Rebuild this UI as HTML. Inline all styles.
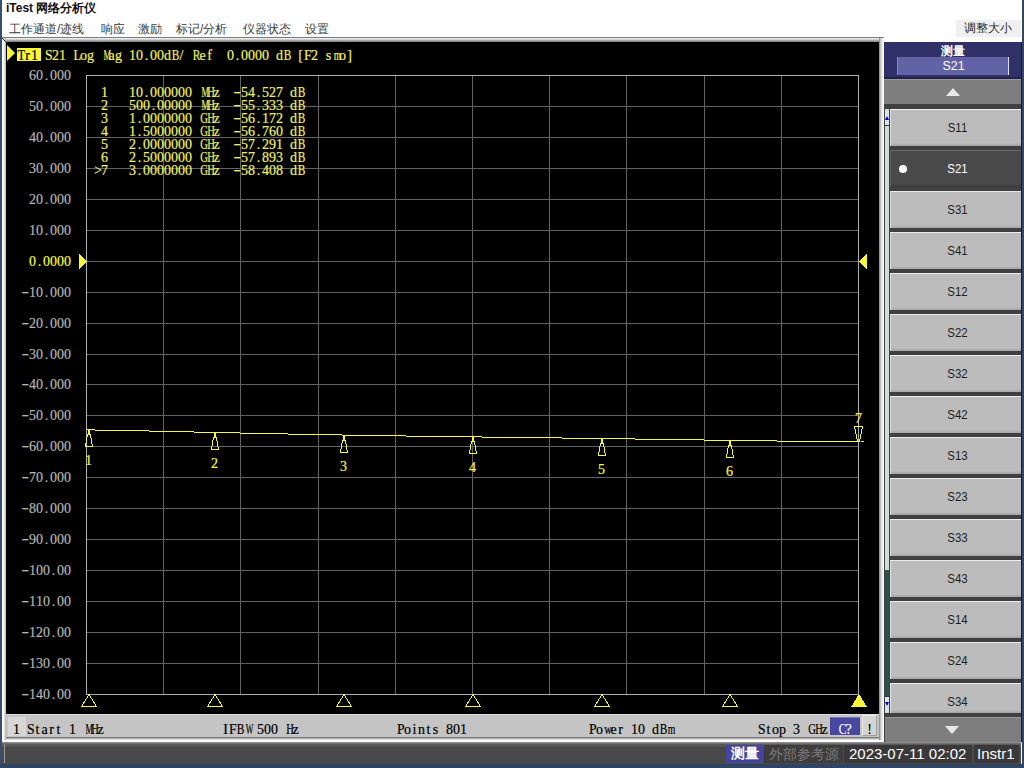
<!DOCTYPE html>
<html><head><meta charset="utf-8"><style>
*{margin:0;padding:0;box-sizing:border-box}
html,body{width:1024px;height:768px;overflow:hidden;background:#fff;font-family:"Liberation Sans",sans-serif}
.a{position:absolute}
.sf{position:absolute;font-family:"Liberation Serif",serif;font-size:14px;line-height:18px;white-space:pre;-webkit-text-stroke:0.2px currentColor}
.sf i{display:inline-block;width:7px;text-align:center;font-style:normal}
.sf b{display:inline-block;font-weight:normal}
.m{position:absolute;font-family:"Liberation Mono",monospace;font-size:13px;line-height:18px;white-space:pre;transform:scaleX(0.89744);transform-origin:0 0}
.menu{position:absolute;top:20px;font-size:12px;line-height:18px;color:#3a3a3a}
.btn{position:absolute;left:890px;width:131px;background:linear-gradient(#bcbcbc 0,#bcbcbc calc(100% - 3px),#a4a4a4 100%);border-top:1px solid #ececec;border-left:1px solid #e0e0e0;color:#1e1e1e;font-size:13px}
.btn.sel{background:linear-gradient(#4a4a4a 0,#4a4a4a calc(100% - 3px),#383838 100%);border-top:1px solid #6a6a6a;border-left:1px solid #606060;color:#fff}
.bt{position:absolute;left:1px;width:131px;text-align:center;line-height:18px;transform:scaleX(0.88)}
.dot{position:absolute;left:8px;top:14px;width:8px;height:8px;border-radius:50%;background:#fff}
</style></head><body>
<!-- borders -->
<div class="a" style="left:0;top:0;width:2px;height:768px;background:#34506e"></div>
<div class="a" style="left:1022px;top:0;width:2px;height:768px;background:#37455f"></div>
<div class="a" style="left:1021px;top:42px;width:1px;height:700px;background:#1c1c26"></div>
<div class="a" style="left:0;top:764px;width:1024px;height:4px;background:#2e4462"></div>
<!-- title & menu -->
<div class="a" style="left:6px;top:0px;font-size:12px;line-height:16px;font-weight:bold;color:#111">iTest 网络分析仪</div>
<div class="menu" style="left:9px">工作通道/迹线</div>
<div class="menu" style="left:101px">响应</div>
<div class="menu" style="left:138px">激励</div>
<div class="menu" style="left:176px">标记/分析</div>
<div class="menu" style="left:243px">仪器状态</div>
<div class="menu" style="left:305px">设置</div>
<div class="a" style="left:956px;top:20px;width:65px;height:17px;background:#f0f0f0"></div>
<div class="a" style="left:964px;top:19px;font-size:12px;line-height:18px;color:#2a2a2a">调整大小</div>
<!-- chart frame -->
<div class="a" style="left:2px;top:37px;width:882px;height:1px;background:#7c7c7c"></div>
<div class="a" style="left:2px;top:38px;width:882px;height:4px;background:linear-gradient(#ececec 0 1px,#d0d0d0 1px 2px,#a8a8a8 2px 3px,#8c8c8c 3px 4px)"></div>
<div class="a" style="left:2px;top:38px;width:4px;height:704px;background:linear-gradient(90deg,#fbfbfb 0 2px,#dcdcdc 2px 3px,#c4c4c4 3px 4px)"></div>
<div class="a" style="left:879px;top:38px;width:5px;height:704px;background:linear-gradient(90deg,#959595 0 1px,#c0c0c0 1px 2px,#dcdcdc 2px 3px,#eeeeee 3px 4px,#fdfdfd 4px 5px)"></div>
<div class="a" style="left:6px;top:737px;width:873px;height:5px;background:linear-gradient(#787878 0 1px,#b0b0b0 1px 2px,#dcdcdc 2px 3px,#fafafa 3px 5px)"></div>
<div class="a" style="left:2px;top:740px;width:882px;height:2px;background:#fafafa"></div>
<div class="a" style="left:6px;top:42px;width:873px;height:672px;background:#000"></div>
<div class="a" style="left:2px;top:38px;width:1px;height:1px;background:#222"></div><div class="a" style="left:3px;top:39px;width:1px;height:1px;background:#222"></div><div class="a" style="left:4px;top:40px;width:1px;height:1px;background:#222"></div><div class="a" style="left:5px;top:41px;width:1px;height:1px;background:#222"></div>
<svg class="a" style="left:0;top:0" width="1024" height="768" shape-rendering="crispEdges">
<rect x="163" y="75" width="1" height="620" fill="#626262"/>
<rect x="240" y="75" width="1" height="620" fill="#626262"/>
<rect x="318" y="75" width="1" height="620" fill="#626262"/>
<rect x="395" y="75" width="1" height="620" fill="#626262"/>
<rect x="472" y="75" width="1" height="620" fill="#626262"/>
<rect x="549" y="75" width="1" height="620" fill="#626262"/>
<rect x="626" y="75" width="1" height="620" fill="#626262"/>
<rect x="704" y="75" width="1" height="620" fill="#626262"/>
<rect x="781" y="75" width="1" height="620" fill="#626262"/>
<rect x="86" y="106" width="773" height="1" fill="#626262"/>
<rect x="86" y="137" width="773" height="1" fill="#626262"/>
<rect x="86" y="168" width="773" height="1" fill="#626262"/>
<rect x="86" y="199" width="773" height="1" fill="#626262"/>
<rect x="86" y="230" width="773" height="1" fill="#626262"/>
<rect x="86" y="261" width="773" height="1" fill="#626262"/>
<rect x="86" y="292" width="773" height="1" fill="#626262"/>
<rect x="86" y="323" width="773" height="1" fill="#626262"/>
<rect x="86" y="354" width="773" height="1" fill="#626262"/>
<rect x="86" y="384" width="773" height="1" fill="#626262"/>
<rect x="86" y="415" width="773" height="1" fill="#626262"/>
<rect x="86" y="446" width="773" height="1" fill="#626262"/>
<rect x="86" y="477" width="773" height="1" fill="#626262"/>
<rect x="86" y="508" width="773" height="1" fill="#626262"/>
<rect x="86" y="539" width="773" height="1" fill="#626262"/>
<rect x="86" y="570" width="773" height="1" fill="#626262"/>
<rect x="86" y="601" width="773" height="1" fill="#626262"/>
<rect x="86" y="632" width="773" height="1" fill="#626262"/>
<rect x="86" y="663" width="773" height="1" fill="#626262"/>
<rect x="86" y="75" width="773" height="1" fill="#b0b0b0"/>
<rect x="86" y="694" width="773" height="1" fill="#b0b0b0"/>
<rect x="86" y="75" width="1" height="620" fill="#b0b0b0"/>
<rect x="858" y="75" width="1" height="620" fill="#b0b0b0"/>
<rect x="87" y="429" width="8" height="1" fill="#f8f838"/>
<rect x="95" y="430" width="54" height="1" fill="#f8f838"/>
<rect x="149" y="431" width="45" height="1" fill="#f8f838"/>
<rect x="194" y="432" width="46" height="1" fill="#f8f838"/>
<rect x="240" y="433" width="48" height="1" fill="#f8f838"/>
<rect x="288" y="434" width="54" height="1" fill="#f8f838"/>
<rect x="342" y="435" width="64" height="1" fill="#f8f838"/>
<rect x="406" y="436" width="76" height="1" fill="#f8f838"/>
<rect x="482" y="437" width="80" height="1" fill="#f8f838"/>
<rect x="562" y="438" width="73" height="1" fill="#f8f838"/>
<rect x="635" y="439" width="69" height="1" fill="#f8f838"/>
<rect x="704" y="440" width="73" height="1" fill="#f8f838"/>
<rect x="777" y="441" width="82" height="1" fill="#f8f838"/>
<rect x="88" y="429" width="2" height="5" fill="#f8f838"/>
<path d="M87.5 434.5 L90.5 434.5 L92.5 446.5 L85.5 446.5 Z" fill="none" stroke="#f8f838" stroke-width="1"/>
<path d="M89 694.5 L96.5 706.5 L81.5 706.5 Z" fill="none" stroke="#f8f838" stroke-width="1"/>
<rect x="214" y="432" width="2" height="5" fill="#f8f838"/>
<path d="M213.5 437.5 L216.5 437.5 L218.5 449.5 L211.5 449.5 Z" fill="none" stroke="#f8f838" stroke-width="1"/>
<path d="M215 694.5 L222.5 706.5 L207.5 706.5 Z" fill="none" stroke="#f8f838" stroke-width="1"/>
<rect x="343" y="435" width="2" height="5" fill="#f8f838"/>
<path d="M342.5 440.5 L345.5 440.5 L347.5 452.5 L340.5 452.5 Z" fill="none" stroke="#f8f838" stroke-width="1"/>
<path d="M344 694.5 L351.5 706.5 L336.5 706.5 Z" fill="none" stroke="#f8f838" stroke-width="1"/>
<rect x="472" y="436" width="2" height="5" fill="#f8f838"/>
<path d="M471.5 441.5 L474.5 441.5 L476.5 453.5 L469.5 453.5 Z" fill="none" stroke="#f8f838" stroke-width="1"/>
<path d="M473 694.5 L480.5 706.5 L465.5 706.5 Z" fill="none" stroke="#f8f838" stroke-width="1"/>
<rect x="601" y="438" width="2" height="5" fill="#f8f838"/>
<path d="M600.5 443.5 L603.5 443.5 L605.5 455.5 L598.5 455.5 Z" fill="none" stroke="#f8f838" stroke-width="1"/>
<path d="M602 694.5 L609.5 706.5 L594.5 706.5 Z" fill="none" stroke="#f8f838" stroke-width="1"/>
<rect x="729" y="440" width="2" height="5" fill="#f8f838"/>
<path d="M728.5 445.5 L731.5 445.5 L733.5 457.5 L726.5 457.5 Z" fill="none" stroke="#f8f838" stroke-width="1"/>
<path d="M730 694.5 L737.5 706.5 L722.5 706.5 Z" fill="none" stroke="#f8f838" stroke-width="1"/>
<path d="M854.5 426.5 L862.5 426.5 L859.5 441.5 L857.5 441.5 Z" fill="none" stroke="#f8f838" stroke-width="1"/>
<rect x="861" y="441" width="3" height="1" fill="#f8f838"/>
<path d="M859 694 L867 707 L851 707 Z" fill="#f8f838"/>
<path d="M79 254 L87 261.5 L79 269 Z" fill="#f8f838"/>
<path d="M867 254 L859 261.5 L867 269 Z" fill="#f8f838"/>
</svg>
<!-- Tr1 -->
<div class="a" style="left:7px;top:45px;width:0;height:0;border-top:8px solid transparent;border-bottom:8px solid transparent;border-left:8px solid #f8f838"></div>
<div class="a" style="left:17px;top:48px;width:24px;height:13px;background:#f8f838"></div>
<div class="sf" style="left:17px;top:47px;color:#000;"><i><b style="transform:scaleX(0.889)">T</b></i><i>r</i><i>1</i></div>
<div class="sf" style="left:29px;top:67px;color:#b4b4b4;"><i>6</i><i>0</i><i>.</i><i>0</i><i>0</i><i>0</i></div>
<div class="sf" style="left:29px;top:98px;color:#b4b4b4;"><i>5</i><i>0</i><i>.</i><i>0</i><i>0</i><i>0</i></div>
<div class="sf" style="left:29px;top:129px;color:#b4b4b4;"><i>4</i><i>0</i><i>.</i><i>0</i><i>0</i><i>0</i></div>
<div class="sf" style="left:29px;top:160px;color:#b4b4b4;"><i>3</i><i>0</i><i>.</i><i>0</i><i>0</i><i>0</i></div>
<div class="sf" style="left:29px;top:191px;color:#b4b4b4;"><i>2</i><i>0</i><i>.</i><i>0</i><i>0</i><i>0</i></div>
<div class="sf" style="left:29px;top:222px;color:#b4b4b4;"><i>1</i><i>0</i><i>.</i><i>0</i><i>0</i><i>0</i></div>
<div class="sf" style="left:29px;top:253px;color:#f8f838;"><i>0</i><i>.</i><i>0</i><i>0</i><i>0</i><i>0</i></div>
<div class="sf" style="left:22px;top:284px;color:#b4b4b4;"><i><b style="transform:scaleX(1.600) translateY(-1.5px)">-</b></i><i>1</i><i>0</i><i>.</i><i>0</i><i>0</i><i>0</i></div>
<div class="sf" style="left:22px;top:315px;color:#b4b4b4;"><i><b style="transform:scaleX(1.600) translateY(-1.5px)">-</b></i><i>2</i><i>0</i><i>.</i><i>0</i><i>0</i><i>0</i></div>
<div class="sf" style="left:22px;top:346px;color:#b4b4b4;"><i><b style="transform:scaleX(1.600) translateY(-1.5px)">-</b></i><i>3</i><i>0</i><i>.</i><i>0</i><i>0</i><i>0</i></div>
<div class="sf" style="left:22px;top:376px;color:#b4b4b4;"><i><b style="transform:scaleX(1.600) translateY(-1.5px)">-</b></i><i>4</i><i>0</i><i>.</i><i>0</i><i>0</i><i>0</i></div>
<div class="sf" style="left:22px;top:407px;color:#b4b4b4;"><i><b style="transform:scaleX(1.600) translateY(-1.5px)">-</b></i><i>5</i><i>0</i><i>.</i><i>0</i><i>0</i><i>0</i></div>
<div class="sf" style="left:22px;top:438px;color:#b4b4b4;"><i><b style="transform:scaleX(1.600) translateY(-1.5px)">-</b></i><i>6</i><i>0</i><i>.</i><i>0</i><i>0</i><i>0</i></div>
<div class="sf" style="left:22px;top:469px;color:#b4b4b4;"><i><b style="transform:scaleX(1.600) translateY(-1.5px)">-</b></i><i>7</i><i>0</i><i>.</i><i>0</i><i>0</i><i>0</i></div>
<div class="sf" style="left:22px;top:500px;color:#b4b4b4;"><i><b style="transform:scaleX(1.600) translateY(-1.5px)">-</b></i><i>8</i><i>0</i><i>.</i><i>0</i><i>0</i><i>0</i></div>
<div class="sf" style="left:22px;top:531px;color:#b4b4b4;"><i><b style="transform:scaleX(1.600) translateY(-1.5px)">-</b></i><i>9</i><i>0</i><i>.</i><i>0</i><i>0</i><i>0</i></div>
<div class="sf" style="left:22px;top:562px;color:#b4b4b4;"><i><b style="transform:scaleX(1.600) translateY(-1.5px)">-</b></i><i>1</i><i>0</i><i>0</i><i>.</i><i>0</i><i>0</i></div>
<div class="sf" style="left:22px;top:593px;color:#b4b4b4;"><i><b style="transform:scaleX(1.600) translateY(-1.5px)">-</b></i><i>1</i><i>1</i><i>0</i><i>.</i><i>0</i><i>0</i></div>
<div class="sf" style="left:22px;top:624px;color:#b4b4b4;"><i><b style="transform:scaleX(1.600) translateY(-1.5px)">-</b></i><i>1</i><i>2</i><i>0</i><i>.</i><i>0</i><i>0</i></div>
<div class="sf" style="left:22px;top:655px;color:#b4b4b4;"><i><b style="transform:scaleX(1.600) translateY(-1.5px)">-</b></i><i>1</i><i>3</i><i>0</i><i>.</i><i>0</i><i>0</i></div>
<div class="sf" style="left:22px;top:686px;color:#b4b4b4;"><i><b style="transform:scaleX(1.600) translateY(-1.5px)">-</b></i><i>1</i><i>4</i><i>0</i><i>.</i><i>0</i><i>0</i></div>
<div class="sf" style="left:45px;top:47px;color:#f0f068;"><i><b style="transform:scaleX(0.976)">S</b></i><i>2</i><i>1</i><i> </i><i><b style="transform:scaleX(0.889)">L</b></i><i>o</i><i>g</i><i> </i><i><b style="transform:scaleX(0.611)">M</b></i><i>a</i><i>g</i><i> </i><i>1</i><i>0</i><i>.</i><i>0</i><i>0</i><i>d</i><i><b style="transform:scaleX(0.814)">B</b></i><i>/</i><i> </i><i><b style="transform:scaleX(0.814)">R</b></i><i>e</i><i>f</i><i> </i><i> </i><i>0</i><i>.</i><i>0</i><i>0</i><i>0</i><i>0</i><i> </i><i>d</i><i><b style="transform:scaleX(0.814)">B</b></i><i> </i><i>[</i><i><b style="transform:scaleX(0.976)">F</b></i><i>2</i><i> </i><i>s</i><i><b style="transform:scaleX(0.698)">m</b></i><i>o</i><i>]</i></div>
<div class="sf" style="left:94px;top:84px;color:#f0f068;"><i> </i><i>1</i><i> </i><i> </i><i> </i><i>1</i><i>0</i><i>.</i><i>0</i><i>0</i><i>0</i><i>0</i><i>0</i><i>0</i><i> </i><i><b style="transform:scaleX(0.611)">M</b></i><i><b style="transform:scaleX(0.752)">H</b></i><i>z</i><i> </i><i> </i><i><b style="transform:scaleX(1.600) translateY(-1.5px)">-</b></i><i>5</i><i>4</i><i>.</i><i>5</i><i>2</i><i>7</i><i> </i><i>d</i><i><b style="transform:scaleX(0.814)">B</b></i></div>
<div class="sf" style="left:94px;top:97px;color:#f0f068;"><i> </i><i>2</i><i> </i><i> </i><i> </i><i>5</i><i>0</i><i>0</i><i>.</i><i>0</i><i>0</i><i>0</i><i>0</i><i>0</i><i> </i><i><b style="transform:scaleX(0.611)">M</b></i><i><b style="transform:scaleX(0.752)">H</b></i><i>z</i><i> </i><i> </i><i><b style="transform:scaleX(1.600) translateY(-1.5px)">-</b></i><i>5</i><i>5</i><i>.</i><i>3</i><i>3</i><i>3</i><i> </i><i>d</i><i><b style="transform:scaleX(0.814)">B</b></i></div>
<div class="sf" style="left:94px;top:110px;color:#f0f068;"><i> </i><i>3</i><i> </i><i> </i><i> </i><i>1</i><i>.</i><i>0</i><i>0</i><i>0</i><i>0</i><i>0</i><i>0</i><i>0</i><i> </i><i><b style="transform:scaleX(0.752)">G</b></i><i><b style="transform:scaleX(0.752)">H</b></i><i>z</i><i> </i><i> </i><i><b style="transform:scaleX(1.600) translateY(-1.5px)">-</b></i><i>5</i><i>6</i><i>.</i><i>1</i><i>7</i><i>2</i><i> </i><i>d</i><i><b style="transform:scaleX(0.814)">B</b></i></div>
<div class="sf" style="left:94px;top:123px;color:#f0f068;"><i> </i><i>4</i><i> </i><i> </i><i> </i><i>1</i><i>.</i><i>5</i><i>0</i><i>0</i><i>0</i><i>0</i><i>0</i><i>0</i><i> </i><i><b style="transform:scaleX(0.752)">G</b></i><i><b style="transform:scaleX(0.752)">H</b></i><i>z</i><i> </i><i> </i><i><b style="transform:scaleX(1.600) translateY(-1.5px)">-</b></i><i>5</i><i>6</i><i>.</i><i>7</i><i>6</i><i>0</i><i> </i><i>d</i><i><b style="transform:scaleX(0.814)">B</b></i></div>
<div class="sf" style="left:94px;top:136px;color:#f0f068;"><i> </i><i>5</i><i> </i><i> </i><i> </i><i>2</i><i>.</i><i>0</i><i>0</i><i>0</i><i>0</i><i>0</i><i>0</i><i>0</i><i> </i><i><b style="transform:scaleX(0.752)">G</b></i><i><b style="transform:scaleX(0.752)">H</b></i><i>z</i><i> </i><i> </i><i><b style="transform:scaleX(1.600) translateY(-1.5px)">-</b></i><i>5</i><i>7</i><i>.</i><i>2</i><i>9</i><i>1</i><i> </i><i>d</i><i><b style="transform:scaleX(0.814)">B</b></i></div>
<div class="sf" style="left:94px;top:149px;color:#f0f068;"><i> </i><i>6</i><i> </i><i> </i><i> </i><i>2</i><i>.</i><i>5</i><i>0</i><i>0</i><i>0</i><i>0</i><i>0</i><i>0</i><i> </i><i><b style="transform:scaleX(0.752)">G</b></i><i><b style="transform:scaleX(0.752)">H</b></i><i>z</i><i> </i><i> </i><i><b style="transform:scaleX(1.600) translateY(-1.5px)">-</b></i><i>5</i><i>7</i><i>.</i><i>8</i><i>9</i><i>3</i><i> </i><i>d</i><i><b style="transform:scaleX(0.814)">B</b></i></div>
<div class="sf" style="left:94px;top:162px;color:#f0f068;"><i><b style="transform:scaleX(0.963)">&gt;</b></i><i>7</i><i> </i><i> </i><i> </i><i>3</i><i>.</i><i>0</i><i>0</i><i>0</i><i>0</i><i>0</i><i>0</i><i>0</i><i> </i><i><b style="transform:scaleX(0.752)">G</b></i><i><b style="transform:scaleX(0.752)">H</b></i><i>z</i><i> </i><i> </i><i><b style="transform:scaleX(1.600) translateY(-1.5px)">-</b></i><i>5</i><i>8</i><i>.</i><i>4</i><i>0</i><i>8</i><i> </i><i>d</i><i><b style="transform:scaleX(0.814)">B</b></i></div>
<div class="sf" style="left:85px;top:452px;color:#f8f838;"><i>1</i></div>
<div class="sf" style="left:211px;top:455px;color:#f8f838;"><i>2</i></div>
<div class="sf" style="left:340px;top:458px;color:#f8f838;"><i>3</i></div>
<div class="sf" style="left:469px;top:459px;color:#f8f838;"><i>4</i></div>
<div class="sf" style="left:598px;top:461px;color:#f8f838;"><i>5</i></div>
<div class="sf" style="left:726px;top:463px;color:#f8f838;"><i>6</i></div>
<div class="sf" style="left:855px;top:410px;color:#f8f838;"><i>7</i></div>
<!-- chart status strip -->
<div class="a" style="left:6px;top:714px;width:873px;height:23px;background:#c4c4c4;border-top:1px solid #dcdcdc"></div>
<div class="a" style="left:8px;top:717px;width:18px;height:19px;background:#d6d6d6"></div>
<div class="sf" style="left:13px;top:721px;color:#000;"><i>1</i><i> </i><i><b style="transform:scaleX(0.976)">S</b></i><i>t</i><i>a</i><i>r</i><i>t</i><i> </i><i>1</i><i> </i><i><b style="transform:scaleX(0.611)">M</b></i><i><b style="transform:scaleX(0.752)">H</b></i><i>z</i></div>
<div class="sf" style="left:222px;top:721px;color:#000;"><i>I</i><i><b style="transform:scaleX(0.976)">F</b></i><i><b style="transform:scaleX(0.814)">B</b></i><i><b style="transform:scaleX(0.575)">W</b></i><i> </i><i>5</i><i>0</i><i>0</i><i> </i><i><b style="transform:scaleX(0.752)">H</b></i><i>z</i></div>
<div class="sf" style="left:397px;top:721px;color:#000;"><i><b style="transform:scaleX(0.976)">P</b></i><i>o</i><i>i</i><i>n</i><i>t</i><i>s</i><i> </i><i>8</i><i>0</i><i>1</i></div>
<div class="sf" style="left:589px;top:721px;color:#000;"><i><b style="transform:scaleX(0.976)">P</b></i><i>o</i><i><b style="transform:scaleX(0.752)">w</b></i><i>e</i><i>r</i><i> </i><i>1</i><i>0</i><i> </i><i>d</i><i><b style="transform:scaleX(0.814)">B</b></i><i><b style="transform:scaleX(0.698)">m</b></i></div>
<div class="sf" style="left:758px;top:721px;color:#000;"><i><b style="transform:scaleX(0.976)">S</b></i><i>t</i><i>o</i><i>p</i><i> </i><i>3</i><i> </i><i><b style="transform:scaleX(0.752)">G</b></i><i><b style="transform:scaleX(0.752)">H</b></i><i>z</i></div>
<div class="a" style="left:830px;top:717px;width:30px;height:18px;background:#4848a0;border-top:1px solid #7878b8"></div>
<div class="sf" style="left:838px;top:721px;color:#fff;"><i><b style="transform:scaleX(0.814)">C</b></i><i>?</i></div>
<div class="a" style="left:862px;top:715px;width:15px;height:21px;background:#d4d4d4;border:1px solid #eaeaea;border-right-color:#a0a0a0;border-bottom-color:#a0a0a0"></div>
<div class="sf" style="left:866px;top:721px;color:#000;"><i>!</i></div>
<!-- bottom dark status -->
<div class="a" style="left:2px;top:742px;width:1019px;height:22px;background:linear-gradient(#8c8c8c 0 1px,#727272 1px 2px,#5a5a5a 2px 4px,#4a4949 5px)"></div>
<div class="a" style="left:4px;top:744px;width:1px;height:19px;background:#9a9a9a"></div>
<div class="a" style="left:726px;top:745px;width:37px;height:18px;background:#44449c"></div>
<div class="a" style="left:731px;top:743px;font-size:14px;line-height:20px;font-weight:bold;color:#fff">测量</div>
<div class="a" style="left:764px;top:745px;width:79px;height:18px;background:#3e3c3c"></div>
<div class="a" style="left:769px;top:744px;font-size:14px;line-height:20px;color:#7a7a7a">外部参考源</div>
<div class="a" style="left:844px;top:745px;width:128px;height:18px;background:#3a3838"></div>
<div class="a" style="left:849px;top:744px;font-size:15px;line-height:20px;color:#fff">2023-07-11 02:02</div>
<div class="a" style="left:974px;top:745px;width:45px;height:18px;background:#3a3838"></div>
<div class="a" style="left:977px;top:744px;font-size:15px;line-height:20px;color:#fff">Instr1</div>
<!-- right panel -->
<div class="a" style="left:884px;top:42px;width:137px;height:700px;background:#404040"></div>
<div class="a" style="left:884px;top:42px;width:137px;height:37px;background:#313169;border-bottom:2px solid #20204a"></div>
<div class="a" style="left:884px;top:43px;width:137px;text-align:center;font-size:12px;line-height:17px;font-weight:bold;color:#fff">测量</div>
<div class="a" style="left:897px;top:57px;width:112px;height:18px;background:#6262a6;border-left:1px solid #8a8ac0;border-right:1px solid #e0e0f0"></div>
<div class="a" style="left:885px;top:58px;width:137px;text-align:center;font-size:12.5px;line-height:17px;color:#fff">S21</div>
<div class="a" style="left:884px;top:79px;width:137px;height:25px;background:#7e7e7e;border-top:1px solid #9a9a9a"></div>
<div class="a" style="left:946px;top:88px;width:0;height:0;border-left:7px solid transparent;border-right:7px solid transparent;border-bottom:8px solid #e8e8e8"></div>
<div class="a" style="left:884px;top:109px;width:6px;height:604px;background:#d2dcd8;border-left:1px solid #3a4040;border-right:1px solid #3a4040"></div>
<div class="a" style="left:885px;top:570px;width:4px;height:126px;background:#2c5248"></div>
<div class="a" style="left:885px;top:111px;width:4px;height:15px;background:#dde4ee;border-bottom:1px solid #333"></div>
<div class="a" style="left:885px;top:116px;width:0;height:0;border-left:2px solid transparent;border-right:2px solid transparent;border-bottom:4px solid #0000d0"></div>
<div class="a" style="left:885px;top:696px;width:4px;height:16px;background:#dde4ee;border-top:1px solid #333"></div>
<div class="a" style="left:885px;top:702px;width:0;height:0;border-left:2px solid transparent;border-right:2px solid transparent;border-top:4px solid #0000d0"></div>
<div class="btn" style="top:109px;height:37px"><span class="bt" style="top:9px">S11</span></div>
<div class="btn sel" style="top:150px;height:37px"><span class="dot"></span><span class="bt" style="top:9px">S21</span></div>
<div class="btn" style="top:191px;height:37px"><span class="bt" style="top:9px">S31</span></div>
<div class="btn" style="top:232px;height:37px"><span class="bt" style="top:9px">S41</span></div>
<div class="btn" style="top:273px;height:37px"><span class="bt" style="top:9px">S12</span></div>
<div class="btn" style="top:314px;height:37px"><span class="bt" style="top:9px">S22</span></div>
<div class="btn" style="top:355px;height:37px"><span class="bt" style="top:9px">S32</span></div>
<div class="btn" style="top:396px;height:37px"><span class="bt" style="top:9px">S42</span></div>
<div class="btn" style="top:437px;height:37px"><span class="bt" style="top:9px">S13</span></div>
<div class="btn" style="top:478px;height:37px"><span class="bt" style="top:9px">S23</span></div>
<div class="btn" style="top:519px;height:37px"><span class="bt" style="top:9px">S33</span></div>
<div class="btn" style="top:560px;height:37px"><span class="bt" style="top:9px">S43</span></div>
<div class="btn" style="top:601px;height:37px"><span class="bt" style="top:9px">S14</span></div>
<div class="btn" style="top:642px;height:37px"><span class="bt" style="top:9px">S24</span></div>
<div class="btn" style="top:683px;height:30px"><span class="bt" style="top:9px">S34</span></div>
<div class="a" style="left:885px;top:717px;width:136px;height:25px;background:#7e7e7e;border-top:1px solid #9a9a9a"></div>
<div class="a" style="left:945px;top:726px;width:0;height:0;border-left:7px solid transparent;border-right:7px solid transparent;border-top:8px solid #e8e8e8"></div>
</body></html>
